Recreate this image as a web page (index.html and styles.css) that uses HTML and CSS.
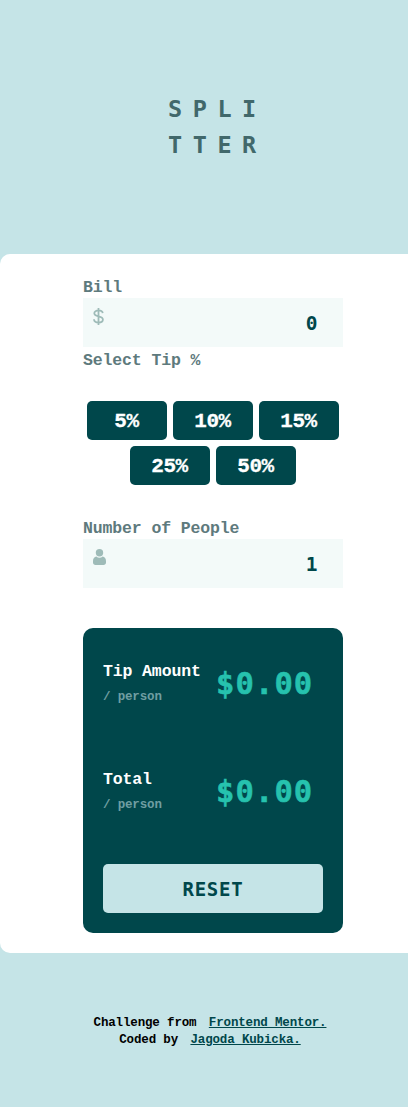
FILE: index.html
```html
<!DOCTYPE html>
<html lang="en">
<head>
<meta charset="utf-8">
<title>Splitter</title>
<link rel="stylesheet" href="styles.css">
</head>
<body>
<header class="logo"><div>SPLI</div><div>TTER</div></header>
<main class="card">
  <div class="label">Bill</div>
  <div class="field">
    <svg class="icon" width="11" height="17" viewBox="0 0 11 17"><path d="M5.500 0v17M9.700 5.200C9.500 3.200 7.800 2.400 5.500 2.400S1.300 3.400 1.300 5.300c0 4.400 8.600 1.800 8.600 6.200 0 2-1.900 3-4.400 3S1 13.500 1 11.200" fill="none" stroke="#9ebbb8" stroke-width="1.800"/></svg>
    <span>0</span>
  </div>
  <div class="label">Select Tip %</div>
  <div class="tips">
    <button class="tip">5%</button><button class="tip">10%</button><button class="tip">15%</button><button class="tip">25%</button><button class="tip">50%</button>
  </div>
  <div class="label">Number of People</div>
  <div class="field people">
    <svg class="icon" width="13" height="16" viewBox="0 0 13 16"><path d="M9.600 7.600c-.8.8-1.900 1.200-3.100 1.200s-2.300-.4-3.100-1.200C1.300 8 0 9.700 0 12v1.500C0 15 1 16 2.500 16h8c1.500 0 2.500-1 2.500-2.500V12c0-2.300-1.300-4-3.400-4.400z" fill="#9ebbb8"/><circle cx="6.500" cy="3.800" r="3.700" fill="#9ebbb8"/></svg>
    <span>1</span>
  </div>
  <section class="result">
    <div class="row"><div><div class="name">Tip Amount</div><div class="per">/ person</div></div><div class="amount">$0.00</div></div>
    <div class="row"><div><div class="name">Total</div><div class="per">/ person</div></div><div class="amount">$0.00</div></div>
    <button class="reset">RESET</button>
  </section>
</main>
<footer class="footer">
  <div>Challenge from <a href="#">Frontend Mentor.</a></div>
  <div>Coded by <a href="#">Jagoda Kubicka.</a></div>
</footer>
</body>
</html>
```
FILE: styles.css
```css
* { box-sizing: border-box; }
body {
  margin: 0;
  background: #c5e4e7;
  font-family: "Liberation Mono", monospace;
  font-weight: 700;
}
button { font: inherit; border: 0; padding: 0; }
.logo, .field, .amount, .reset { font-family: "DejaVu Sans Mono", monospace; }
.logo {
  height: 254px;
  padding: 91px 0 0 168px;
  font-size: 23.500px;
  line-height: 36px;
  letter-spacing: 10.550px;
  color: #41686b;
}
.card {
  height: 699px;
  padding: 23px 65px 0 83px;
  background: #fff;
  border-radius: 10px 0 0 10px;
}
.label { height: 21px; font-size: 16.500px; line-height: 21px; letter-spacing: -0.130px; color: #5e7a7d; }
.field {
  display: flex;
  justify-content: space-between;
  align-items: flex-start;
  width: 260px;
  height: 49px;
  margin-bottom: 3px;
  padding: 10px 25px 0 10px;
  background: #f3faf9;
  font-size: 19.500px;
  line-height: 31px;
  letter-spacing: 0.500px;
  color: #00474b;
}
.tips {
  display: flex;
  flex-wrap: wrap;
  justify-content: center;
  align-content: flex-start;
  gap: 6px;
  width: 260px;
  height: 147px;
  padding-top: 30px;
}
.tip {
  width: 80px;
  height: 39px;
  padding: 2px 1px 0 0;
  border-radius: 5px;
  background: #00474b;
  color: #fff;
  font-size: 21px;
  letter-spacing: -0.400px;
  -webkit-text-stroke: 0.300px #fff;
}
.people { margin-bottom: 40px; }
.result {
  width: 260px;
  height: 305px;
  padding: 32px 20px 0;
  border-radius: 10px;
  background: #00474b;
}
.row { display: flex; height: 108px; }
.row > div:first-child { width: 113px; }
.name { font-size: 16.500px; line-height: 23px; letter-spacing: -0.130px; color: #fff; }
.per { margin-top: 5px; font-size: 12.500px; line-height: 18px; letter-spacing: -0.160px; color: #6f9ea2; }
.amount {
  font-size: 30.500px;
  line-height: 48px;
  letter-spacing: 1.100px;
  color: #26c2ae;
  -webkit-text-stroke: 0.500px #26c2ae;
}
.reset {
  display: block;
  width: 220px;
  height: 49px;
  margin-top: -12px;
  padding-top: 1px;
  border-radius: 5px;
  background: #c5e4e7;
  color: #00474b;
  font-size: 19px;
  letter-spacing: 0.800px;
}
.footer {
  padding: 62px 0 0 12px;
  text-align: center;
  font-size: 12.500px;
  line-height: 17px;
  letter-spacing: -0.150px;
  color: #000;
}
.footer a { margin-left: 5px; color: #00474b; }
```
